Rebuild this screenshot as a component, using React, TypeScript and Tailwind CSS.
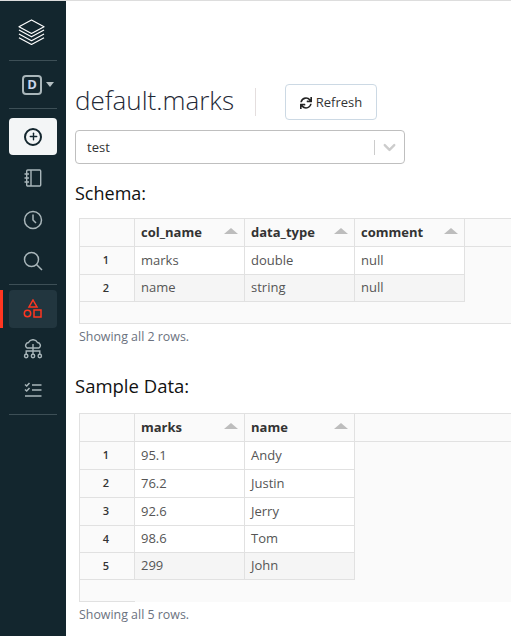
import { Plus, ChevronDown } from "lucide-react";
import { FaSync } from "react-icons/fa";

const font = "font-['Open_Sans',sans-serif]";

const SideIcon = ({ children, className = "" }: { children: React.ReactNode; className?: string }) => (
  <div className={`mx-[9px] flex items-center justify-center rounded-[4px] ${className}`}>{children}</div>
);

const Divider = () => <div className="mx-[9px] h-px bg-[#3d4f56]" />;

const Sidebar = () => (
  <aside className="flex w-[66px] shrink-0 flex-col bg-[#13262e]">
    {/* logo */}
    <SideIcon className="h-[59px] pr-[3px] pt-[3px]">
      <svg width="27" height="28" viewBox="0 0 28 28" fill="none" stroke="#ffffff" strokeWidth="1.2" strokeLinejoin="round">
        <path d="M14 1.5 L27 8.5 L14 15.5 L1 8.5 Z" />
        <path d="M1 12 L14 19 L27 12" />
        <path d="M1 16 L14 23 L27 16" />
        <path d="M1 20 L14 27 L27 20" />
      </svg>
    </SideIcon>
    <Divider />
    <div className="flex h-[47px] items-center gap-[4px] pl-[22px]">
      <div className="flex h-[20px] w-[20px] items-center justify-center rounded-[4px] border-2 border-[#a9b6ba] text-[13px] font-bold leading-none text-[#c9d4ea]">
        D
      </div>
      <div className="h-0 w-0 border-x-[4px] border-t-[5px] border-x-transparent border-t-[#b4bfc2]" />
    </div>
    <Divider />
    <SideIcon className="mt-[9px] h-[37px] bg-[#f3f5f6]">
      <div className="flex h-[18px] w-[18px] items-center justify-center rounded-full border-2 border-[#13262e]">
        <Plus size={11} color="#13262e" strokeWidth={3} />
      </div>
    </SideIcon>
    <SideIcon className="mt-[4px] h-[37px] pr-[1px]">
      <svg width="18" height="18" viewBox="0 0 18 18" fill="none" stroke="#a9b6ba" strokeWidth="1.4">
        <rect x="2.7" y="1" width="14" height="16" rx="1" />
        <path d="M7 1 V17 M0.5 5 H5 M0.5 9 H5 M0.5 13 H5" />
      </svg>
    </SideIcon>
    <SideIcon className="mt-[3px] h-[41px] pr-[1px]">
      <svg width="20" height="20" viewBox="0 0 20 20" fill="none" stroke="#a9b6ba" strokeWidth="1.5">
        <circle cx="10" cy="10" r="8.5" />
        <path d="M10 4.5 V10 L13 13" />
      </svg>
    </SideIcon>
    <SideIcon className="h-[41px] pr-[1px]">
      <svg width="20" height="20" viewBox="0 0 20 20" fill="none" stroke="#a9b6ba" strokeWidth="1.5">
        <circle cx="8.5" cy="8.5" r="7" />
        <path d="M13.5 13.5 L19 19" />
      </svg>
    </SideIcon>
    <div className="mt-[3px]">
      <Divider />
    </div>
    <div className="relative mt-[5px]">
      <div className="absolute left-0 top-0 h-[38px] w-[3px] bg-[#ff3621]" />
      <SideIcon className="h-[38px] bg-[#22363f] pr-[1px]">
        <svg width="20" height="20" viewBox="0 0 20 20" fill="none" stroke="#ff3621" strokeWidth="1.5">
          <path d="M10 1 L14 8 H6 Z" />
          <circle cx="4.5" cy="14.5" r="3.2" />
          <rect x="11" y="11" width="7" height="7" />
        </svg>
      </SideIcon>
    </div>
    <SideIcon className="h-[41px] pr-[1px]">
      <svg width="20" height="20" viewBox="0 0 20 20" fill="none" stroke="#a9b6ba" strokeWidth="1.4">
        <path d="M4 9 A3 3 0 0 1 5.5 3.5 A5 5 0 0 1 14.5 3.5 A3 3 0 0 1 16 9 Z" />
        <path d="M10 5 V15 M3.2 15 V12 H16.8 V15" />
        <circle cx="3.2" cy="17" r="1.7" />
        <circle cx="10" cy="17" r="1.7" />
        <circle cx="16.8" cy="17" r="1.7" />
      </svg>
    </SideIcon>
    <SideIcon className="h-[41px] pr-[1px]">
      <svg width="18" height="16" viewBox="0 0 18 16" fill="none" stroke="#a9b6ba" strokeWidth="1.5">
        <path d="M1 2.5 L2.7 4 L5.5 1 M8 3 H17.5 M1 7.5 L2.7 9 L5.5 6 M8 8 H17.5 M1 14 H17.5" />
      </svg>
    </SideIcon>
    <div className="mt-[4px]">
      <Divider />
    </div>
  </aside>
);

const SortArrow = () => (
  <div className="h-0 w-0 border-x-[7px] border-b-[6px] border-x-transparent border-b-[#bdbdbd]" />
);

type TableProps = {
  columns: string[];
  rows: string[][];
  blank: number;
  rowHeights: number[];
  fullFooterLine?: boolean;
};

const DataTable = ({ columns, rows, blank, rowHeights, fullFooterLine = true }: TableProps) => (
  <div className={`ml-[4px] border-l border-t border-[#e1e1e1] bg-[#fafafa] ${fullFooterLine ? "border-b" : ""}`}>
    <div className="flex h-[28px] border-b border-[#e1e1e1]">
      <div className="w-[55px] shrink-0 border-r border-[#e1e1e1]" />
      {columns.map((c) => (
        <div key={c} className="flex w-[110px] shrink-0 items-center justify-between border-r border-[#e1e1e1] pl-[6px] pr-[6px]">
          <span className="pt-[1px] text-[13px] font-bold text-[#333333]">{c}</span>
          <div className="mb-[4px]">
            <SortArrow />
          </div>
        </div>
      ))}
    </div>
    {rows.map((row, i) => {
      const last = i === rows.length - 1;
      return (
        <div key={i} className="flex" style={{ height: rowHeights[i] }}>
          <div className="flex w-[55px] shrink-0 items-center justify-center border-r border-b border-[#e1e1e1] pr-[2px] text-[11px] font-semibold text-[#333333]">
            {i + 1}
          </div>
          {row.map((cell, j) => (
            <div
              key={j}
              className={`flex w-[110px] shrink-0 items-center border-r border-b border-[#e1e1e1] pl-[6px] text-[13px] text-[#555555] ${last ? "bg-[#f5f5f5]" : "bg-white"}`}
            >
              {cell}
            </div>
          ))}
        </div>
      );
    })}
    <div style={{ height: blank }} />
    {!fullFooterLine && <div className="h-px w-[55px] bg-[#e1e1e1]" />}
  </div>
);

const App = () => (
  <div className={`flex h-[636px] w-[511px] overflow-hidden border-t border-[#dddddd] bg-white ${font}`}>
    <Sidebar />
    <main className="min-w-0 flex-1 pl-[9px]">
      <div className="mt-[83px] flex items-center">
        <h1 className="w-[160px] pb-[4px] text-[26px] font-light leading-[32px] text-[#1f2937]">default.marks</h1>
        <div className="ml-[20px] h-[28px] w-px bg-[#e4dede]" />
        <button className="ml-[29px] flex h-[36px] w-[92px] items-center justify-center gap-[4px] rounded-[4px] border border-[#ccd9e4] bg-white pt-[1px] text-[13px] text-[#333333]">
          <FaSync size={12} color="#222222" />
          Refresh
        </button>
      </div>
      <div className="mt-[10px] flex h-[34px] w-[330px] items-center justify-between rounded-[4px] border border-[#bfbfbf] pl-[11px] text-[13px] text-[#333333]">
        <span className="pt-[1px]">test</span>
        <div className="flex items-center">
          <div className="h-[15px] w-px bg-[#cccccc]" />
          <ChevronDown size={19} strokeWidth={3} color="#cccccc" className="mx-[5px]" />
        </div>
      </div>
      <h2 className="mt-[16px] h-[26px] text-[18px] leading-[26px] text-[#111111]">Schema:</h2>
      <div className="mt-[12px]">
        <DataTable
          columns={["col_name", "data_type", "comment"]}
          rows={[
            ["marks", "double", "null"],
            ["name", "string", "null"],
          ]}
          rowHeights={[28, 27]}
          blank={21}
        />
      </div>
      <p className="ml-[4px] mt-[4px] text-[12.4px] leading-[18px] text-[#6b7280]">Showing all 2 rows.</p>
      <h2 className="mt-[27px] h-[26px] text-[18.5px] leading-[26px] text-[#111111]">Sample Data:</h2>
      <div className="mt-[14px]">
        <DataTable
          columns={["marks", "name"]}
          rows={[
            ["95.1", "Andy"],
            ["76.2", "Justin"],
            ["92.6", "Jerry"],
            ["98.6", "Tom"],
            ["299", "John"],
          ]}
          rowHeights={[28, 28, 28, 27, 27]}
          blank={21}
          fullFooterLine={false}
        />
      </div>
      <p className="ml-[4px] mt-[4px] text-[12.4px] leading-[18px] text-[#6b7280]">Showing all 5 rows.</p>
    </main>
  </div>
);

export default App;
